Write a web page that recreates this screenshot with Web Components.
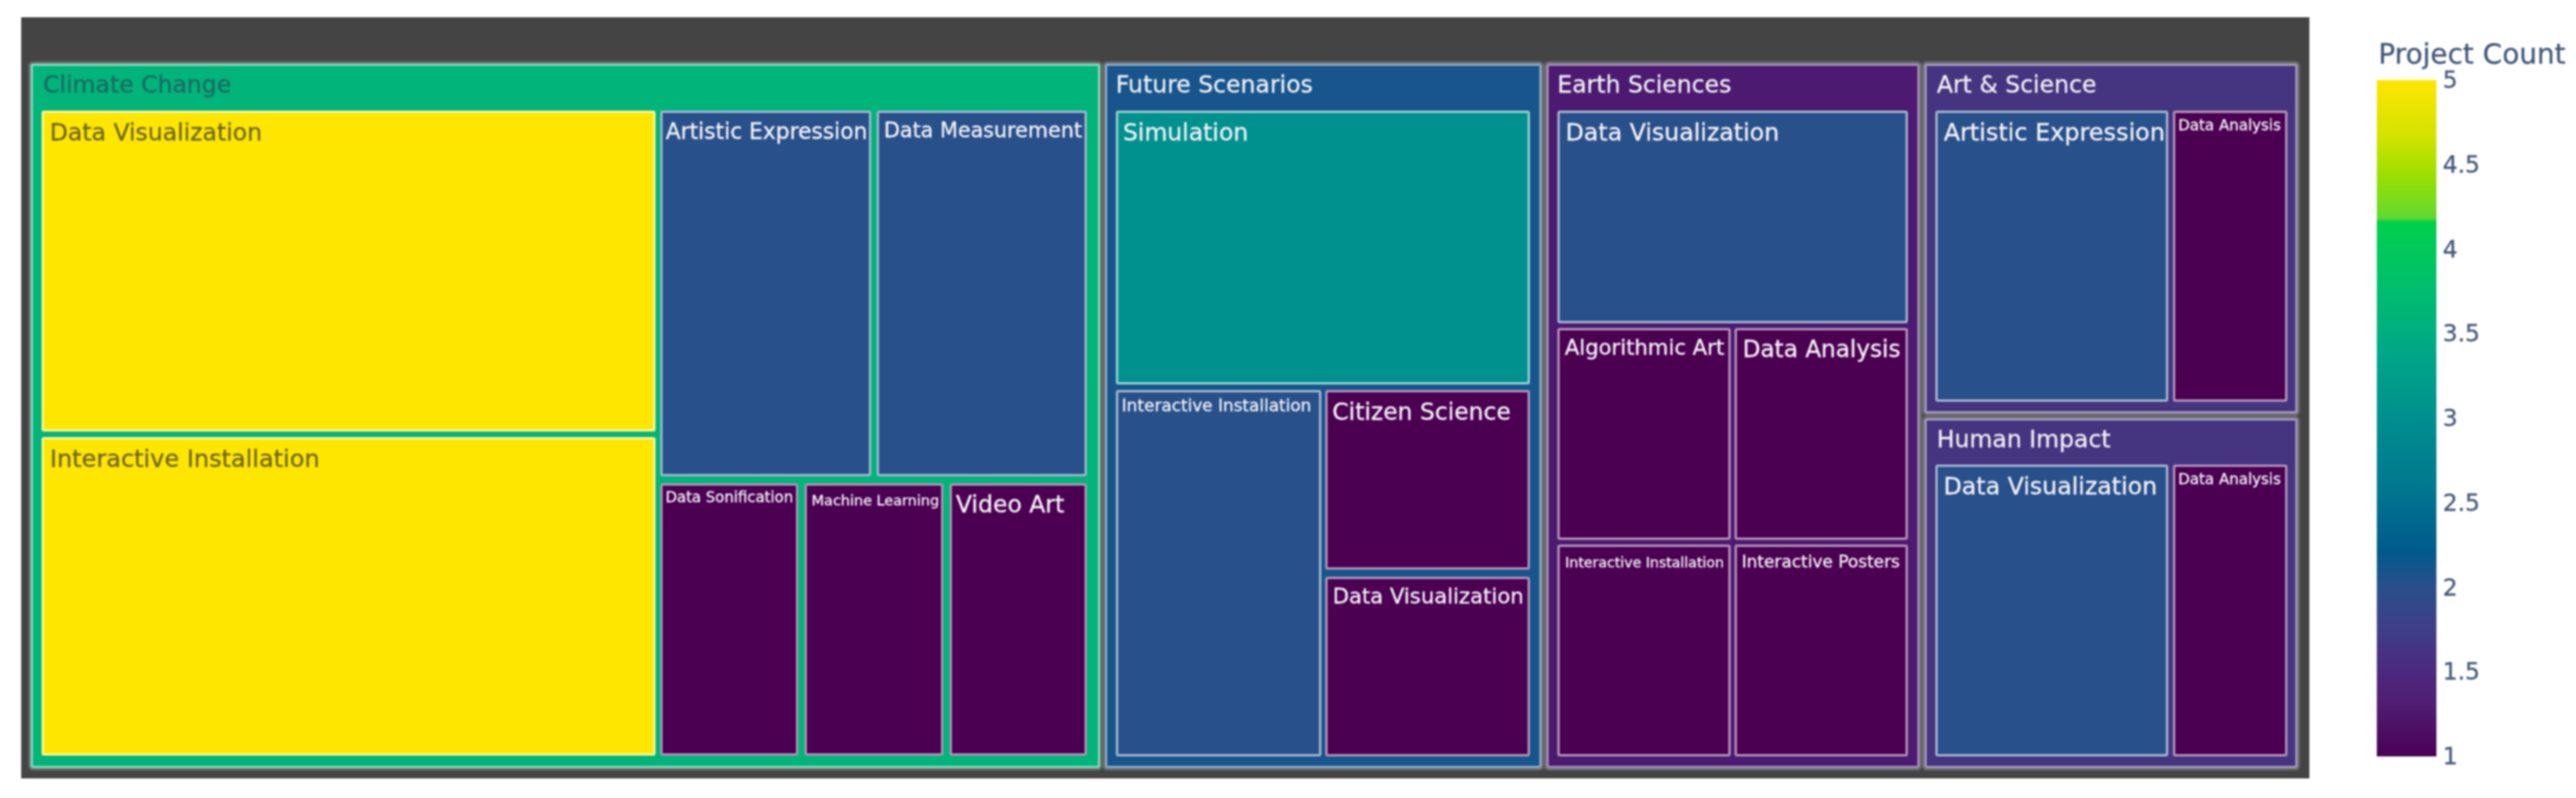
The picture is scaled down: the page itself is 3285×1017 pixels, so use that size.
<!DOCTYPE html>
<html>
<head>
<meta charset="utf-8">
<title>Project Count treemap</title>
<style>
    html, body { margin: 0; padding: 0; background: #fff; }
    body { width: 3285px; height: 1017px; overflow: hidden; font-family: "DejaVu Sans", sans-serif; }
    #chart { display: flex; align-items: flex-start; width: 3285px; height: 1017px; padding: 22px 0 0 27px; box-sizing: border-box; filter: blur(0.9px); }
</style>
</head>
<body>
<div id="chart">
    <tree-map>
        <tm-group label="Climate Change" color="#00b47a" ink="#1c6a62" width="1364" cols="783px 544px" gap="6">
            <tm-stack rows="409px 406px" gap="7">
                <tm-tile label="Data Visualization" color="#ffe600" ink="#6b6420" size="30"></tm-tile>
                <tm-tile label="Interactive Installation" color="#ffe600" ink="#6b6420" size="30.6"></tm-tile>
            </tm-stack>
            <tm-stack rows="466px 347px" gap="9">
                <tm-stack cols="269px 268px" gap="7">
                    <tm-tile label="Artistic Expression" color="#28508a" size="27.8" pad="7 0 0 4"></tm-tile>
                    <tm-tile label="Data Measurement" color="#28508a" size="26.4"></tm-tile>
                </tm-stack>
                <tm-stack cols="176px 177px 175px" gap="8">
                    <tm-tile label="Data Sonification" color="#4b0052" size="19"></tm-tile>
                    <tm-tile label="Machine Learning" color="#4b0052" size="18.4" pad="8 0 0 6"></tm-tile>
                    <tm-tile label="Video Art" color="#4b0052" size="30" pad="6 0 0 5"></tm-tile>
                </tm-stack>
            </tm-stack>
        </tm-group>
        <tm-group label="Future Scenarios" color="#17558c" width="557" rows="349px 467px" gap="7" inset="14">
            <tm-tile label="Simulation" color="#00918e" size="30" pad="7 0 0 6"></tm-tile>
            <tm-stack cols="262px 261px" gap="5">
                <tm-tile label="Interactive Installation" color="#28508a" size="21.5"></tm-tile>
                <tm-stack rows="229px 229px" gap="9">
                    <tm-tile label="Citizen Science" color="#4b0052" size="29.9" pad="7 0 0 6"></tm-tile>
                    <tm-tile label="Data Visualization" color="#4b0052" size="27"></tm-tile>
                </tm-stack>
            </tm-stack>
        </tm-group>
        <tm-group label="Earth Sciences" color="#4c1a70" width="476" rows="271px 270px 270px" gap="6" inset="14">
            <tm-tile label="Data Visualization" color="#28508a" size="30.2"></tm-tile>
            <tm-stack cols="221px 221px" gap="5">
                <tm-tile label="Algorithmic Art" color="#4b0052" size="27"></tm-tile>
                <tm-tile label="Data Analysis" color="#4b0052" size="29.5"></tm-tile>
            </tm-stack>
            <tm-stack cols="221px 221px" gap="5">
                <tm-tile label="Interactive Installation" color="#4b0052" size="18" pad="9 0 0 7"></tm-tile>
                <tm-tile label="Interactive Posters" color="#4b0052" size="21.6" pad="6 0 0 6"></tm-tile>
            </tm-stack>
        </tm-group>
        <tm-column width="476">
            <tm-group label="Art &amp; Science" color="#45347f" height="446" cols="297px 146px" rows="371px" gap="6">
                <tm-tile label="Artistic Expression" color="#28508a" size="30.5"></tm-tile>
                <tm-tile label="Data Analysis" color="#4b0052" size="19.2"></tm-tile>
            </tm-group>
            <tm-group label="Human Impact" color="#45347f" height="446" head="59" cols="297px 146px" rows="372px" gap="6">
                <tm-tile label="Data Visualization" color="#28508a" size="30.2"></tm-tile>
                <tm-tile label="Data Analysis" color="#4b0052" size="19.2"></tm-tile>
            </tm-group>
        </tm-column>
    </tree-map>
    <color-bar title-text="Project Count" ticks="5,4.5,4,3.5,3,2.5,2,1.5,1"></color-bar>
</div>

<script>
    // the outer dark plot, its top band is the empty pathbar
    class TreeMap extends HTMLElement {
        constructor() {
            super();
            this.attachShadow({ mode: "open" });
            this.shadowRoot.innerHTML = `
                <style>
                    :host {
                        display: flex;
                        flex: none;
                        box-sizing: border-box;
                        width: 2918px;
                        height: 970px;
                        padding: 59px 14px 13px 12px;
                        gap: 6px;
                        background: #444444;
                    }
                </style>
                <slot></slot>
            `;
        }
    }

    class TmColumn extends HTMLElement {
        constructor() {
            super();
            this.attachShadow({ mode: "open" });
        }

        connectedCallback() {
            const width = this.getAttribute("width");
            this.shadowRoot.innerHTML = `
                <style>
                    :host {
                        display: flex;
                        flex-direction: column;
                        gap: 6px;
                        flex: none;
                        width: ${width}px;
                    }
                </style>
                <slot></slot>
            `;
        }
    }

    // helper: grid tracks from the rows / cols attributes
    function trackStyle(el) {
        const rows = el.getAttribute("rows");
        const cols = el.getAttribute("cols");
        let css = "";
        if (rows) css += `grid-template-rows: ${rows};`;
        if (cols) css += `grid-template-columns: ${cols};`;
        return css + `gap: ${el.getAttribute("gap") || 0}px;`;
    }

    class TmGroup extends HTMLElement {
        constructor() {
            super();
            this.attachShadow({ mode: "open" });
        }

        connectedCallback() {
            const color = this.getAttribute("color");
            const ink = this.getAttribute("ink") || "#f2f2f6";
            const width = this.getAttribute("width");
            const height = this.getAttribute("height");
            const head = this.getAttribute("head") || 60;
            const inset = this.getAttribute("inset") || 16;
            this.shadowRoot.innerHTML = `
                <style>
                    :host {
                        display: block;
                        flex: none;
                        box-sizing: border-box;
                        ${width ? `width: ${width}px;` : ""}
                        height: ${height ? height + "px" : "100%"};
                        background: ${color};
                        border-radius: 3px;
                        box-shadow: inset 0 0 0 3px color-mix(in srgb, ${color}, #ffffff 50%), 0 0 0 3px #696969;
                    }
                    .label {
                        height: ${head}px;
                        box-sizing: border-box;
                        padding: 9px 0 0 ${inset}px;
                        font-size: 30px;
                        color: ${ink};
                        -webkit-text-stroke: .3px ${ink};
                        white-space: nowrap;
                    }
                    .body {
                        display: grid;
                        padding: 0 15px 0 14px;
                        ${trackStyle(this)}
                    }
                </style>
                <div class="label">${this.getAttribute("label").replace("&", "&amp;")}</div>
                <div class="body"><slot></slot></div>
            `;
        }
    }

    class TmStack extends HTMLElement {
        constructor() {
            super();
            this.attachShadow({ mode: "open" });
        }

        connectedCallback() {
            this.shadowRoot.innerHTML = `
                <style>
                    :host {
                        display: grid;
                        min-width: 0;
                        ${trackStyle(this)}
                    }
                </style>
                <slot></slot>
            `;
        }
    }

    class TmTile extends HTMLElement {
        constructor() {
            super();
            this.attachShadow({ mode: "open" });
        }

        connectedCallback() {
            const color = this.getAttribute("color");
            const ink = this.getAttribute("ink") || "#f6f4f8";
            const pad = this.getAttribute("pad");
            const padding = pad ? pad.split(" ").map(n => n + "px").join(" ") : "calc(.34em - 3px) 0 0 calc(.35em - 3px)";
            this.shadowRoot.innerHTML = `
                <style>
                    :host {
                        display: block;
                        box-sizing: border-box;
                        min-width: 0;
                        min-height: 0;
                        background: ${color};
                        border: 3px solid color-mix(in srgb, ${color}, #ffffff 58%);
                        border-radius: 3px;
                        color: ${ink};
                        font-size: ${this.getAttribute("size")}px;
                        -webkit-text-stroke: .3px ${ink};
                    }
                    span {
                        display: block;
                        padding: ${padding};
                        white-space: nowrap;
                    }
                </style>
                <span>${this.getAttribute("label")}</span>
            `;
        }
    }

    class ColorBar extends HTMLElement {
        constructor() {
            super();
            this.attachShadow({ mode: "open" });
        }

        connectedCallback() {
            const ticks = this.getAttribute("ticks").split(",");
            this.shadowRoot.innerHTML = `
                <style>
                    :host {
                        display: block;
                        flex: none;
                        width: 255px;
                        margin-left: 86px;
                        color: #41577a;
                        -webkit-text-stroke: .3px #41577a;
                    }
                    .title {
                        height: 80px;
                        padding-left: 2px;
                        box-sizing: border-box;
                        font-size: 35.6px;
                        line-height: 41px;
                        padding-top: 26px;
                        white-space: nowrap;
                    }
                    .scale {
                        display: flex;
                        gap: 8px;
                        height: 862px;
                    }
                    .bar {
                        width: 76px;
                        background: linear-gradient(to bottom,
                            #ffe600 0%, #d6e300 8%, #9ddf00 14%, #62d930 20.4%, #00d04c 21%,
                            #00c06c 30%, #00a887 40%, #008f8e 50%, #007890 60%,
                            #005a8c 69.8%, #2a4f8a 75%, #3e3f88 81%, #4c2a80 87%,
                            #501e74 92%, #4a0055 100%);
                    }
                    .ticks {
                        display: flex;
                        flex-direction: column;
                        justify-content: space-between;
                        height: 862px;
                        font-size: 30px;
                    }
                    .ticks span {
                        display: block;
                        height: 0;
                        line-height: 0;
                    }
                </style>
                <div class="title">${this.getAttribute("title-text")}</div>
                <div class="scale">
                    <div class="bar"></div>
                    <div class="ticks">${ticks.map(tick => `<span>${tick}</span>`).join("")}</div>
                </div>
            `;
        }
    }

    customElements.define("tree-map", TreeMap);
    customElements.define("tm-column", TmColumn);
    customElements.define("tm-group", TmGroup);
    customElements.define("tm-stack", TmStack);
    customElements.define("tm-tile", TmTile);
    customElements.define("color-bar", ColorBar);
</script>
</body>
</html>
